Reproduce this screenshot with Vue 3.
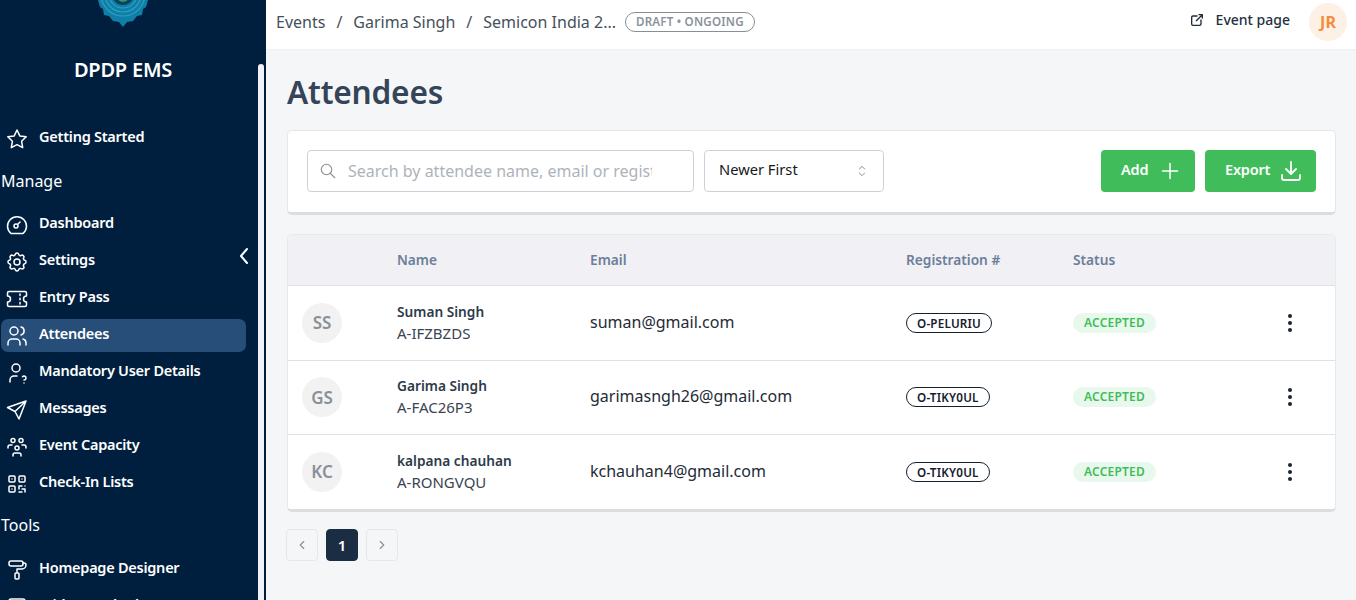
<script setup>
const nav1 = [
  { t: 'Dashboard', i: 'dash' },
  { t: 'Settings', i: 'gear' },
  { t: 'Entry Pass', i: 'pass' },
  { t: 'Attendees', i: 'users', active: true },
  { t: 'Mandatory User Details', i: 'userq' },
  { t: 'Messages', i: 'send' },
  { t: 'Event Capacity', i: 'cap' },
  { t: 'Check-In Lists', i: 'qr' }
]
const nav2 = [
  { t: 'Homepage Designer', i: 'roller' },
  { t: 'Widget Embed', i: 'box' }
]
const rows = [
  { a: 'SS', n: 'Suman Singh', c: 'A-IFZBZDS', e: 'suman@gmail.com', r: 'O-PELURIU' },
  { a: 'GS', n: 'Garima Singh', c: 'A-FAC26P3', e: 'garimasngh26@gmail.com', r: 'O-TIKY0UL' },
  { a: 'KC', n: 'kalpana chauhan', c: 'A-RONGVQU', e: 'kchauhan4@gmail.com', r: 'O-TIKY0UL' }
]
const paths = {
  dash: '<path d="M6 20.500h12a9.500 9.500 0 1 0-12 0z"/><circle cx="11" cy="13" r="2"/><path d="M12.500 11.500L15 9"/>',
  gear: '<path d="M10.300 4.300c.4-1.700 3-1.700 3.400 0a1.700 1.700 0 0 0 2.600 1.100c1.500-.9 3.300.8 2.400 2.400a1.700 1.700 0 0 0 1 2.500c1.800.4 1.800 3 0 3.400a1.700 1.700 0 0 0-1 2.600c.9 1.500-.9 3.300-2.400 2.400a1.700 1.700 0 0 0-2.600 1c-.4 1.800-3 1.800-3.400 0a1.700 1.700 0 0 0-2.600-1c-1.500.9-3.300-.9-2.400-2.400a1.700 1.700 0 0 0-1-2.600c-1.800-.4-1.800-3 0-3.400a1.700 1.700 0 0 0 1-2.500c-.9-1.600.9-3.300 2.400-2.400 1 .6 2.300.1 2.600-1.100z"/><circle cx="12" cy="12" r="3"/>',
  pass: '<path d="M15 7v1.500M15 11.200v1.600M15 15.500v1.500M4 4.500h16a1.500 1.500 0 0 1 1.500 1.500v3a3 3 0 0 0 0 6v3a1.500 1.500 0 0 1-1.500 1.500h-16a1.500 1.500 0 0 1-1.500-1.500v-3a3 3 0 0 0 0-6v-3a1.500 1.500 0 0 1 1.500-1.500z"/>',
  users: '<circle cx="9" cy="7" r="4"/><path d="M3 21v-2a4 4 0 0 1 4-4h4a4 4 0 0 1 4 4v2M16 3.100a4 4 0 0 1 0 7.800M21 21v-2a4 4 0 0 0-3-3.900"/>',
  userq: '<circle cx="11" cy="7" r="4"/><path d="M5 21v-2a4 4 0 0 1 4-4h3M19 22v.01M19 19a2 2 0 0 0 .9-3.800 2 2 0 0 0-2.400.500"/>',
  send: '<path d="M21 3L2.500 9.500l7.500 4 4 7.500L21 3zM10 13.500L21 3"/>',
  cap: '<circle cx="8" cy="5.500" r="2"/><circle cx="16" cy="5.500" r="2"/><circle cx="12" cy="13" r="2"/><path d="M8 21v-1a2 2 0 0 1 2-2h4a2 2 0 0 1 2 2v1M3 13v-1a2 2 0 0 1 2-2h2M21 13v-1a2 2 0 0 0-2-2h-2"/>',
  qr: '<rect x="4" y="4" width="6" height="6" rx="1"/><rect x="14" y="4" width="6" height="6" rx="1"/><rect x="4" y="14" width="6" height="6" rx="1"/><path d="M7 7v.01M17 7v.01M7 17v.01M14 14h3M20 14v.01M14 14v3M14 20h3M17 17h3v3"/>',
  roller: '<rect x="4" y="3" width="14" height="5" rx="2"/><path d="M18 5h1a2 2 0 0 1 2 2 4 4 0 0 1-4 4h-5v3"/><rect x="10" y="15" width="4" height="6" rx="1"/>',
  box: '<rect x="4" y="4" width="16" height="16" rx="2"/>',
  star: '<path d="M12 3l2.800 5.900 6.400.900-4.600 4.500 1.100 6.400L12 17.700l-5.700 3 1.100-6.400-4.600-4.500 6.400-.900z"/>'
}
</script>

<template>
  <div class="app">
    <aside class="side">
      <div class="logo">
        <svg width="50" height="27" viewBox="0 0 50 27">
          <path d="M0 0h50l-2 7-3 2-1 6-5 1-4 5-6 1-4 5-4-5-6-1-4-5-5-1-1-6-3-2z" fill="#0f7fa8"/>
          <g fill="none" stroke="#2f9fc4" stroke-width="1.200">
            <circle cx="25" cy="-6" r="14"/>
            <circle cx="25" cy="-6" r="18"/>
            <circle cx="25" cy="-6" r="22"/>
          </g>
          <circle cx="25" cy="-6" r="11" fill="#0a3f66"/>
          <circle cx="25" cy="-4" r="6" fill="#2e9a5c"/>
        </svg>
      </div>
      <div class="brand">DPDP EMS</div>
      <a class="item first">
        <svg class="ic ic-star" viewBox="0 0 24 24" v-html="paths.star"></svg>
        <span>Getting Started</span>
      </a>
      <div class="sec">Manage</div>
      <a v-for="n in nav1" :key="n.t" class="item" :class="{ active: n.active }">
        <svg class="ic" viewBox="0 0 24 24" v-html="paths[n.i]"></svg>
        <span>{{ n.t }}</span>
      </a>
      <div class="sec tools">Tools</div>
      <a v-for="n in nav2" :key="n.t" class="item">
        <svg class="ic" viewBox="0 0 24 24" v-html="paths[n.i]"></svg>
        <span>{{ n.t }}</span>
      </a>
      <div class="thumb"></div>
      <svg class="collapse" width="12" height="18" viewBox="0 0 12 18"><path d="M9 2L3 9l6 7" fill="none" stroke="#fff" stroke-width="2" stroke-linecap="round" stroke-linejoin="round"/></svg>
    </aside>

    <div class="content">
      <header class="top">
        <nav class="crumbs">
          <span>Events</span><i>/</i><span>Garima Singh</span><i>/</i><span>Semicon India 2...</span>
          <b class="draft">DRAFT • ONGOING</b>
        </nav>
        <div class="right">
          <svg class="ext" viewBox="0 0 24 24"><path d="M12 6H6a2 2 0 0 0-2 2v10a2 2 0 0 0 2 2h10a2 2 0 0 0 2-2v-6M11 13l9-9M15 4h5v5"/></svg>
          <span class="evp">Event page</span>
          <div class="jr">JR</div>
        </div>
      </header>

      <main class="main">
        <h1>Attendees</h1>
        <section class="filter">
          <div class="search">
            <svg viewBox="0 0 24 24"><circle cx="10" cy="10" r="7"/><path d="M21 21l-6-6"/></svg>
            <span class="ph">Search by attendee name, email or registration #</span>
          </div>
          <div class="select">
            <span>Newer First</span>
            <svg viewBox="0 0 24 24"><path d="M8 9l4-4 4 4M16 15l-4 4-4-4"/></svg>
          </div>
          <div class="grow"></div>
          <button class="btn"><span>Add</span>
            <svg viewBox="0 0 24 24"><path d="M12 3v18M3 12h18"/></svg>
          </button>
          <button class="btn exp"><span>Export</span>
            <svg viewBox="0 0 24 24"><path d="M3 16v3a2 2 0 0 0 2 2h14a2 2 0 0 0 2-2v-3M7 10l5 5 5-5M12 3v12"/></svg>
          </button>
        </section>

        <section class="table">
          <div class="row head">
            <div></div><div>Name</div><div>Email</div><div>Registration #</div><div>Status</div><div></div>
          </div>
          <div v-for="r in rows" :key="r.c" class="row body">
            <div><div class="av">{{ r.a }}</div></div>
            <div class="who"><strong>{{ r.n }}</strong><span>{{ r.c }}</span></div>
            <div class="mail">{{ r.e }}</div>
            <div><span class="reg">{{ r.r }}</span></div>
            <div><span class="ok">ACCEPTED</span></div>
            <div class="kebab"><i></i><i></i><i></i></div>
          </div>
        </section>

        <div class="pager">
          <span class="pg"><svg viewBox="0 0 24 24"><path d="M15 6l-6 6 6 6"/></svg></span>
          <span class="pg cur">1</span>
          <span class="pg"><svg viewBox="0 0 24 24"><path d="M9 6l6 6-6 6"/></svg></span>
        </div>
      </main>
    </div>
  </div>
</template>

<style>
html, body { margin: 0; height: 100%; overflow: hidden; }
</style>

<style scoped>
.app { display: flex; height: 600px; width: 1356px; overflow: hidden; font-family: "Noto Sans", "Open Sans", sans-serif; background: #f5f6f8; }
.side { position: relative; width: 266px; flex: none; height: 600px; overflow: hidden; background: #001f3f; color: #fff; }
.logo { height: 27px; display: flex; justify-content: center; overflow: hidden; padding-right: 20px; }
.logo svg { flex: none; }
.brand { margin-top: 32px; padding-right: 20px; text-align: center; font-size: 20px; font-weight: 600; line-height: 22px; letter-spacing: -0.2px; }
.item { display: flex; align-items: center; height: 33px; margin: 0 20px 4px 1px; padding-left: 4px; width: 245px; box-sizing: border-box; border-radius: 7px; font-size: 14.500px; font-weight: 600; letter-spacing: -0.25px; gap: 10px; white-space: nowrap; }
.item span { margin-bottom: 6px; }
.item.first { margin-top: 41px; }
.item.active { background: #274e78; }
.ic { width: 24px; height: 24px; flex: none; fill: none; stroke: #fff; stroke-width: 1.500; stroke-linecap: round; stroke-linejoin: round; }
.sec { font-size: 16px; line-height: 22px; padding-left: 1px; margin: 15px 0 16px; }
.sec.tools { margin-top: 14px; margin-bottom: 17px; }
.thumb { position: absolute; left: 258px; top: 64px; width: 6px; height: 536px; background: #f1f2f8; border-radius: 3px 3px 0 0; }
.collapse { position: absolute; left: 238px; top: 247px; }

.content { flex: 1; min-width: 0; display: flex; flex-direction: column; }
.top { height: 49px; flex: none; background: #fff; display: flex; align-items: center; justify-content: space-between; padding: 0 9px 5px 10px; box-sizing: border-box; box-shadow: 0 1px 1px #f0f0f3; }
.crumbs { display: flex; align-items: center; font-size: 16px; color: #454f5b; white-space: nowrap; }
.crumbs i { font-style: normal; margin: 0 11px; }
.draft { margin-left: 9px; border: 1px solid #868e96; border-radius: 10px; height: 20px; box-sizing: border-box; line-height: 18px; padding: 0 10px; font-size: 11.600px; font-weight: 600; color: #8a929c; letter-spacing: .2px; }
.right { display: flex; align-items: center; }
.ext { width: 16px; height: 16px; fill: none; stroke: #1e2a38; stroke-width: 2; stroke-linecap: round; stroke-linejoin: round; margin: 0 11px 4px 0; }
.evp { font-size: 14px; font-weight: 500; color: #25303e; margin: 0 19px 5px 0; }
.jr { width: 38px; height: 38px; border-radius: 50%; background: #fdf0e4; color: #f58b3c; font-weight: 700; font-size: 16px; display: flex; align-items: center; justify-content: center; }

.main { flex: 1; padding: 0 20px 0 21px; overflow: hidden; }
h1 { margin: 22px 0 18px; font-size: 31.600px; line-height: 41px; font-weight: 600; color: #344559; letter-spacing: -0.2px; }
.filter { height: 85px; box-sizing: border-box; background: #fff; border: 1px solid #e6e7ea; border-bottom: 3px solid #dcdde0; border-radius: 5px; padding: 19px; display: flex; align-items: flex-start; }
.search { width: 387px; height: 42px; box-sizing: border-box; border: 1px solid #ced2d8; border-radius: 4px; display: flex; align-items: center; padding-left: 11px; overflow: hidden; }
.search svg { width: 18px; height: 18px; flex: none; fill: none; stroke: #8b8f94; stroke-width: 1.500; stroke-linecap: round; margin-right: 11px; }
.ph { font-size: 16px; color: #aeb3ba; white-space: nowrap; overflow: hidden; width: 304px; flex: none; }
.select { margin-left: 10px; width: 180px; height: 42px; box-sizing: border-box; border: 1px solid #ced2d8; border-radius: 4px; display: flex; align-items: center; justify-content: space-between; padding: 0 13px 5px 14px; font-size: 14.700px; color: #15191e; }
.select svg { width: 16px; height: 16px; fill: none; stroke: #8b8f94; stroke-width: 1.500; stroke-linecap: round; stroke-linejoin: round; margin-top: 5px; }
.grow { flex: 1; }
.btn { height: 42px; width: 94px; box-sizing: border-box; border: 0; border-radius: 4px; background: #40bd5a; color: #fff; font: inherit; font-size: 14.500px; font-weight: 600; letter-spacing: -0.2px; display: flex; align-items: center; gap: 12px; padding: 0 0 0 20px; }
.btn span { margin-bottom: 4px; }
.btn svg { width: 20px; height: 20px; flex: none; fill: none; stroke: #fff; stroke-width: 1.800; stroke-linecap: round; stroke-linejoin: round; }
.btn.exp { width: 111px; margin-left: 10px; gap: 9px; }
.btn.exp svg { width: 24px; height: 24px; stroke-width: 1.800; }

.table { margin-top: 19px; background: #fff; border: 1px solid #e8e9ec; border-bottom: 3px solid #dcdde0; border-radius: 5px; overflow: hidden; }
.row { display: grid; grid-template-columns: 109px 193px 316px 167px 1fr 90px; align-items: center; }
.head { height: 48px; padding-bottom: 2px; background: #f1f0f5; color: #6b7f99; font-size: 13.700px; font-weight: 600; border-bottom: 1px solid #e0e1e4; }
.body { height: 73.500px; border-bottom: 1px solid #e0e1e4; }
.body:last-child { border-bottom: 0; }
.av { width: 40px; height: 40px; margin-left: 14px; border-radius: 50%; background: #f2f2f3; color: #8a9099; font-size: 17px; font-weight: 600; display: flex; align-items: center; justify-content: center; }
.who { display: flex; flex-direction: column; gap: 2px; }
.who strong { font-size: 13.700px; font-weight: 600; color: #2e3a4a; line-height: 18px; }
.who span { font-size: 15px; color: #3a4452; line-height: 20px; }
.mail { font-size: 16px; color: #232b36; padding-bottom: 2px; }
.reg { display: block; width: fit-content; height: 20px; line-height: 18px; box-sizing: border-box; border: 1px solid #14202e; border-radius: 10px; padding: 0 10px; font-size: 11.700px; font-weight: 600; color: #14202e; letter-spacing: .2px; }
.ok { display: block; width: fit-content; height: 20px; line-height: 19px; border-radius: 10px; padding: 0 11px; background: #e9f8ec; color: #3fbd5a; font-size: 12px; font-weight: 600; letter-spacing: .2px; }
.kebab { display: flex; flex-direction: column; align-items: center; gap: 3px; }
.kebab i { width: 4px; height: 4px; border-radius: 50%; background: #1a2533; }
.pager { margin-top: 17.500px; display: flex; gap: 8px; margin-left: -1px; }
.pg { width: 32px; height: 32px; box-sizing: border-box; border: 1px solid #e6e7ea; border-radius: 4px; display: flex; align-items: center; justify-content: center; }
.pg svg { width: 14px; height: 14px; fill: none; stroke: #8b9199; stroke-width: 2; stroke-linecap: round; stroke-linejoin: round; }
.pg.cur { background: #1a2d42; border-color: #1a2d42; color: #fff; font-weight: 600; font-size: 15px; }
</style>
